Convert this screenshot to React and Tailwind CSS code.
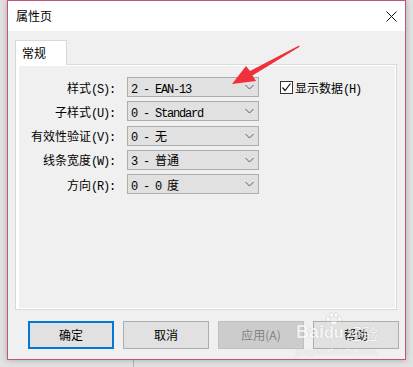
import React from "react";

const CJK = "font-['Noto_Sans_CJK_SC',sans-serif] text-[12px]";
const MONO = "font-['Liberation_Mono',monospace] text-[12px] tracking-[-1.2px]";

// SimSun-style mixed text: CJK at 12px, latin half-width at 6px per char
function T({ text }) {
    const parts = text.match(/[\u3000-\u9fff\uff00-\uffef]+|[^\u3000-\u9fff\uff00-\uffef]+/g) || [];
    return (
        <span className="whitespace-pre leading-none">
            {parts.map((p, i) =>
                /[\u3000-\u9fff\uff00-\uffef]/.test(p) ? (
                    <span key={i} className={CJK}>{p}</span>
                ) : (
                    <span key={i} className={MONO}>{p}</span>
                )
            )}
        </span>
    );
}

function Chevron() {
    return (
        <svg width="9" height="6" viewBox="0 0 9 6" className="mr-[4px] shrink-0">
            <path d="M0.5 1 L4.5 5 L8.5 1" fill="none" stroke="#5a5a5a" strokeWidth="1" />
        </svg>
    );
}

function Select({ value }) {
    return (
        <div className="w-[132px] h-[20px] border border-[#adadad] bg-[#e1e1e1] flex items-center justify-between pl-[3px] text-black">
            <T text={value} />
            <Chevron />
        </div>
    );
}

const rows = [
    ["样式(S):", "2 - EAN-13"],
    ["子样式(U):", "0 - Standard"],
    ["有效性验证(V):", "0 - 无"],
    ["线条宽度(W):", "3 - 普通"],
    ["方向(R):", "0 - 0 度"],
];

function Button({ label, primary, disabled }) {
    let cls = "border border-[#adadad] bg-[#e1e1e1] text-black";
    if (primary) cls = "border-2 border-[#0078d7] bg-[#e1e1e1] text-black";
    if (disabled) cls = "border border-[#bfbfbf] bg-[#cccccc] text-[#838383]";
    return (
        <div className={`w-[86px] h-[28px] flex items-center justify-center ${cls}`}>
            <span className="font-['Noto_Sans_CJK_SC',sans-serif] text-[12px] leading-none">{label}</span>
        </div>
    );
}

export default function App() {
    return (
        <div className="relative w-[413px] h-[367px] overflow-hidden bg-[#e2e2e2]">
            <div className="absolute left-[133px] top-[360px] w-px h-[7px] bg-[#b4b4b4]"></div>

            <div className="relative ml-[7px] w-[399px] h-[360px] border border-[#c4527a] bg-[#f0f0f0] flex flex-col shadow-[0_0_6px_rgba(0,0,0,0.25)]">
                {/* title bar */}
                <div className="h-[30px] bg-white flex items-center justify-between pl-[8px]">
                    <span className="font-['Noto_Sans_CJK_SC',sans-serif] text-[12px] text-black leading-none">属性页</span>
                    <svg width="11" height="11" viewBox="0 0 11 11" className="mr-[8px]">
                        <path d="M0.5 0.5 L10.5 10.5 M10.5 0.5 L0.5 10.5" stroke="#111" strokeWidth="1" />
                    </svg>
                </div>

                <div className="flex-1 flex flex-col pl-[7px] pt-[9px]">
                    {/* tab */}
                    <div className="relative z-10 w-[52px] h-[25px] border-l border-t border-r border-[#d9d9d9] bg-white flex items-center pl-[6px] pb-[1px]">
                        <span className="font-['Noto_Sans_CJK_SC',sans-serif] text-[12px] text-black leading-none">常规</span>
                    </div>

                    {/* panel */}
                    <div className="-mt-px w-[382px] h-[246px] border border-[#d9d9d9] bg-white pl-[3px] pt-[1px] pr-[1px] pb-[1px] flex">
                        <div className="flex-1 bg-[#f0f0f0] pt-[11px]">
                            <div className="flex flex-col gap-[4.25px]">
                                {rows.map(([label, value], i) => (
                                    <div key={label} className="flex items-center h-[20px]">
                                        <div className="w-[96px] flex justify-end text-black">
                                            <T text={label} />
                                        </div>
                                        <div className="ml-[12px]">
                                            <Select value={value} />
                                        </div>
                                        {i === 0 && (
                                            <div className="ml-[21px] flex items-center gap-[2px] text-black">
                                                <div className="w-[13px] h-[13px] border border-[#333] bg-white flex items-center justify-center">
                                                    <svg width="11" height="11" viewBox="0 0 11 11">
                                                        <path d="M1.5 5.5 L4 8.5 L9.5 1.5" fill="none" stroke="#111" strokeWidth="1.2" />
                                                    </svg>
                                                </div>
                                                <T text="显示数据(H)" />
                                            </div>
                                        )}
                                    </div>
                                ))}
                            </div>
                        </div>
                    </div>

                    {/* buttons */}
                    <div className="mt-[11px] ml-[13px] flex gap-[9px]">
                        <Button label="确定" primary />
                        <Button label="取消" />
                        <Button label="应用(A)" disabled />
                        <Button label="帮助" />
                    </div>
                </div>
            </div>

            {/* red annotation arrow */}
            <svg className="absolute left-0 top-0 pointer-events-none" width="413" height="367" viewBox="0 0 413 367">
                <polygon
                    points="232,84 246,66 250,71 299,45.5 299.6,46.8 252.5,75.5 256,81"
                    fill="#f0303a"
                />
            </svg>

            {/* watermark */}
            <div className="absolute left-[296px] top-[312px] pointer-events-none flex flex-col items-start opacity-70">
                <div className="flex items-end">
                    <span className="font-['Liberation_Sans',sans-serif] font-bold text-[18px] leading-none text-white [text-shadow:0_0_1px_#a0a0a0]">Bai</span>
                    <div className="flex flex-col items-center">
                        <svg width="17" height="13" viewBox="0 0 17 13">
                            <ellipse cx="3" cy="7" rx="2" ry="2.6" fill="white" stroke="#bbb" strokeWidth="0.5" />
                            <ellipse cx="6.5" cy="3" rx="2" ry="2.6" fill="white" stroke="#bbb" strokeWidth="0.5" />
                            <ellipse cx="11" cy="3" rx="2" ry="2.6" fill="white" stroke="#bbb" strokeWidth="0.5" />
                            <ellipse cx="14.5" cy="7" rx="2" ry="2.6" fill="white" stroke="#bbb" strokeWidth="0.5" />
                            <ellipse cx="8.8" cy="11" rx="3.5" ry="2" fill="white" stroke="#bbb" strokeWidth="0.5" />
                        </svg>
                        <span className="font-['Liberation_Sans',sans-serif] font-bold text-[16px] leading-none text-white [text-shadow:0_0_1px_#a0a0a0]">du</span>
                    </div>
                    <span className="ml-[3px] font-['Noto_Sans_CJK_SC',sans-serif] text-[16px] leading-none text-white [text-shadow:0_0_1px_#a0a0a0]">经验</span>
                </div>
                <span className="mt-[6px] font-['Liberation_Sans',sans-serif] text-[10px] leading-none text-white [text-shadow:0_0_1px_#a0a0a0]">jingyan.baidu.com</span>
            </div>
        </div>
    );
}
